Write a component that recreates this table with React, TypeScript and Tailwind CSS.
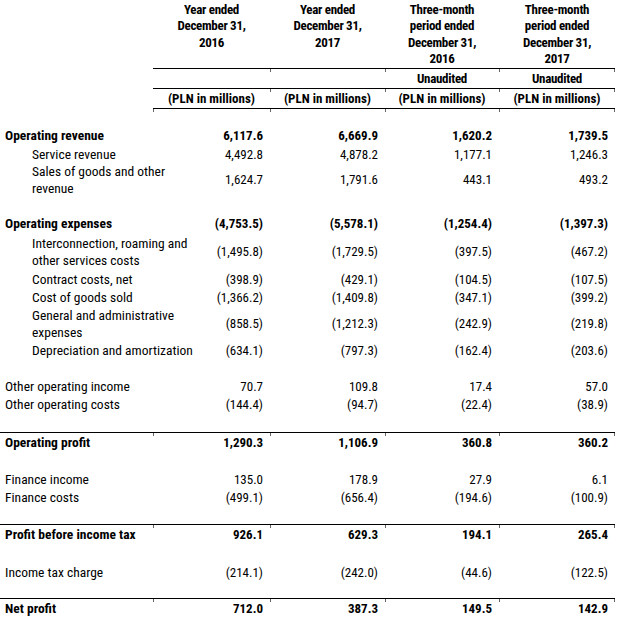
import React from "react";

type Row = {
  label?: string[];
  values?: string[];
  bold?: boolean;
  indent?: boolean;
  h: number;
  lineAbove?: boolean;
};

const rows: Row[] = [
  { h: 17 },
  { label: ["Operating revenue"], values: ["6,117.6", "6,669.9", "1,620.2", "1,739.5"], bold: true, h: 19 },
  { label: ["Service revenue"], values: ["4,492.8", "4,878.2", "1,177.1", "1,246.3"], indent: true, h: 18 },
  { label: ["Sales of goods and other", "revenue"], values: ["1,624.7", "1,791.6", "443.1", "493.2"], indent: true, h: 34 },
  { h: 17 },
  { label: ["Operating expenses"], values: ["(4,753.5)", "(5,578.1)", "(1,254.4)", "(1,397.3)"], bold: true, h: 19 },
  { label: ["Interconnection, roaming and", "other services costs"], values: ["(1,495.8)", "(1,729.5)", "(397.5)", "(467.2)"], indent: true, h: 37 },
  { label: ["Contract costs, net"], values: ["(398.9)", "(429.1)", "(104.5)", "(107.5)"], indent: true, h: 18 },
  { label: ["Cost of goods sold"], values: ["(1,366.2)", "(1,409.8)", "(347.1)", "(399.2)"], indent: true, h: 18 },
  { label: ["General and administrative", "expenses"], values: ["(858.5)", "(1,212.3)", "(242.9)", "(219.8)"], indent: true, h: 35 },
  { label: ["Depreciation and amortization"], values: ["(634.1)", "(797.3)", "(162.4)", "(203.6)"], indent: true, h: 18 },
  { h: 18 },
  { label: ["Other operating income"], values: ["70.7", "109.8", "17.4", "57.0"], h: 18 },
  { label: ["Other operating costs"], values: ["(144.4)", "(94.7)", "(22.4)", "(38.9)"], h: 18 },
  { h: 19 },
  { label: ["Operating profit"], values: ["1,290.3", "1,106.9", "360.8", "360.2"], bold: true, h: 18, lineAbove: true },
  { h: 19 },
  { label: ["Finance income"], values: ["135.0", "178.9", "27.9", "6.1"], h: 18 },
  { label: ["Finance costs"], values: ["(499.1)", "(656.4)", "(194.6)", "(100.9)"], h: 19 },
  { h: 17 },
  { label: ["Profit before income tax"], values: ["926.1", "629.3", "194.1", "265.4"], bold: true, h: 18, lineAbove: true },
  { h: 20 },
  { label: ["Income tax charge"], values: ["(214.1)", "(242.0)", "(44.6)", "(122.5)"], h: 18 },
  { h: 17 },
  { label: ["Net profit"], values: ["712.0", "387.3", "149.5", "142.9"], bold: true, h: 18, lineAbove: true },
];

const headers = [
  ["Year ended", "December 31,", "2016"],
  ["Year ended", "December 31,", "2017"],
  ["Three-month", "period ended", "December 31,", "2016"],
  ["Three-month", "period ended", "December 31,", "2017"],
];

const cols = "grid grid-cols-[153px_117px_115px_114px_116px]";

// little Word-style border ticks hanging under a rule
function Ticks({ from = 0 }: { from?: number }) {
  const xs = [153, 270, 385, 499, 614].filter((x) => x >= from);
  return (
    <>
      {xs.map((x) => (
        <span key={x} className="absolute top-[1px] w-px h-[3px] bg-black/60" style={{ left: x }} />
      ))}
    </>
  );
}

function HeadRule() {
  return (
    <div className="relative">
      <div className="ml-[153px] w-[462px] border-t border-black" />
      <Ticks from={200} />
    </div>
  );
}

export default function App() {
  return (
    <div
      className="w-[630px] h-[628px] bg-white text-black text-[13px] overflow-hidden"
      style={{ fontFamily: '"Roboto Condensed", "Roboto", sans-serif' }}
    >
      {/* column headings */}
      <div className={`${cols} pt-[2px] h-[68px]`}>
        <div />
        {headers.map((h, i) => (
          <div key={i} className="text-center font-bold leading-[16.4px] tracking-[-0.3px]">
            {h.map((t) => (
              <div key={t}>{t}</div>
            ))}
          </div>
        ))}
      </div>
      <HeadRule />
      <div className={`${cols} h-[19px] items-center`}>
        <div />
        <div />
        <div />
        <div className="text-center font-bold tracking-[-0.3px]">Unaudited</div>
        <div className="text-center font-bold tracking-[-0.3px]">Unaudited</div>
      </div>
      <HeadRule />
      <div className={`${cols} h-[19px] items-center`}>
        <div />
        {headers.map((_, i) => (
          <div key={i} className="text-center font-bold">
            (PLN in millions)
          </div>
        ))}
      </div>
      <div className="relative">
        <div className="ml-[153px] w-[462px] border-t border-black" />
        <Ticks />
      </div>

      {/* statement rows */}
      {rows.map((r, i) => (
        <div key={i}>
          {r.lineAbove && (
            <div className="relative">
              <div className="w-[615px] border-t border-black" />
              <Ticks />
            </div>
          )}
          <div className={`${cols} items-center ${r.bold ? "font-bold" : ""}`} style={{ height: r.h }}>
            <div className={`${r.indent ? "pl-[32px]" : "pl-[5px]"} leading-[17px] whitespace-nowrap text-[13.5px]`}>
              {r.label?.map((t) => (
                <div key={t}>{t}</div>
              ))}
            </div>
            {r.values?.map((v, j) => (
              <div key={j} className="text-right pr-[7px]">
                {v}
              </div>
            ))}
          </div>
        </div>
      ))}
    </div>
  );
}
